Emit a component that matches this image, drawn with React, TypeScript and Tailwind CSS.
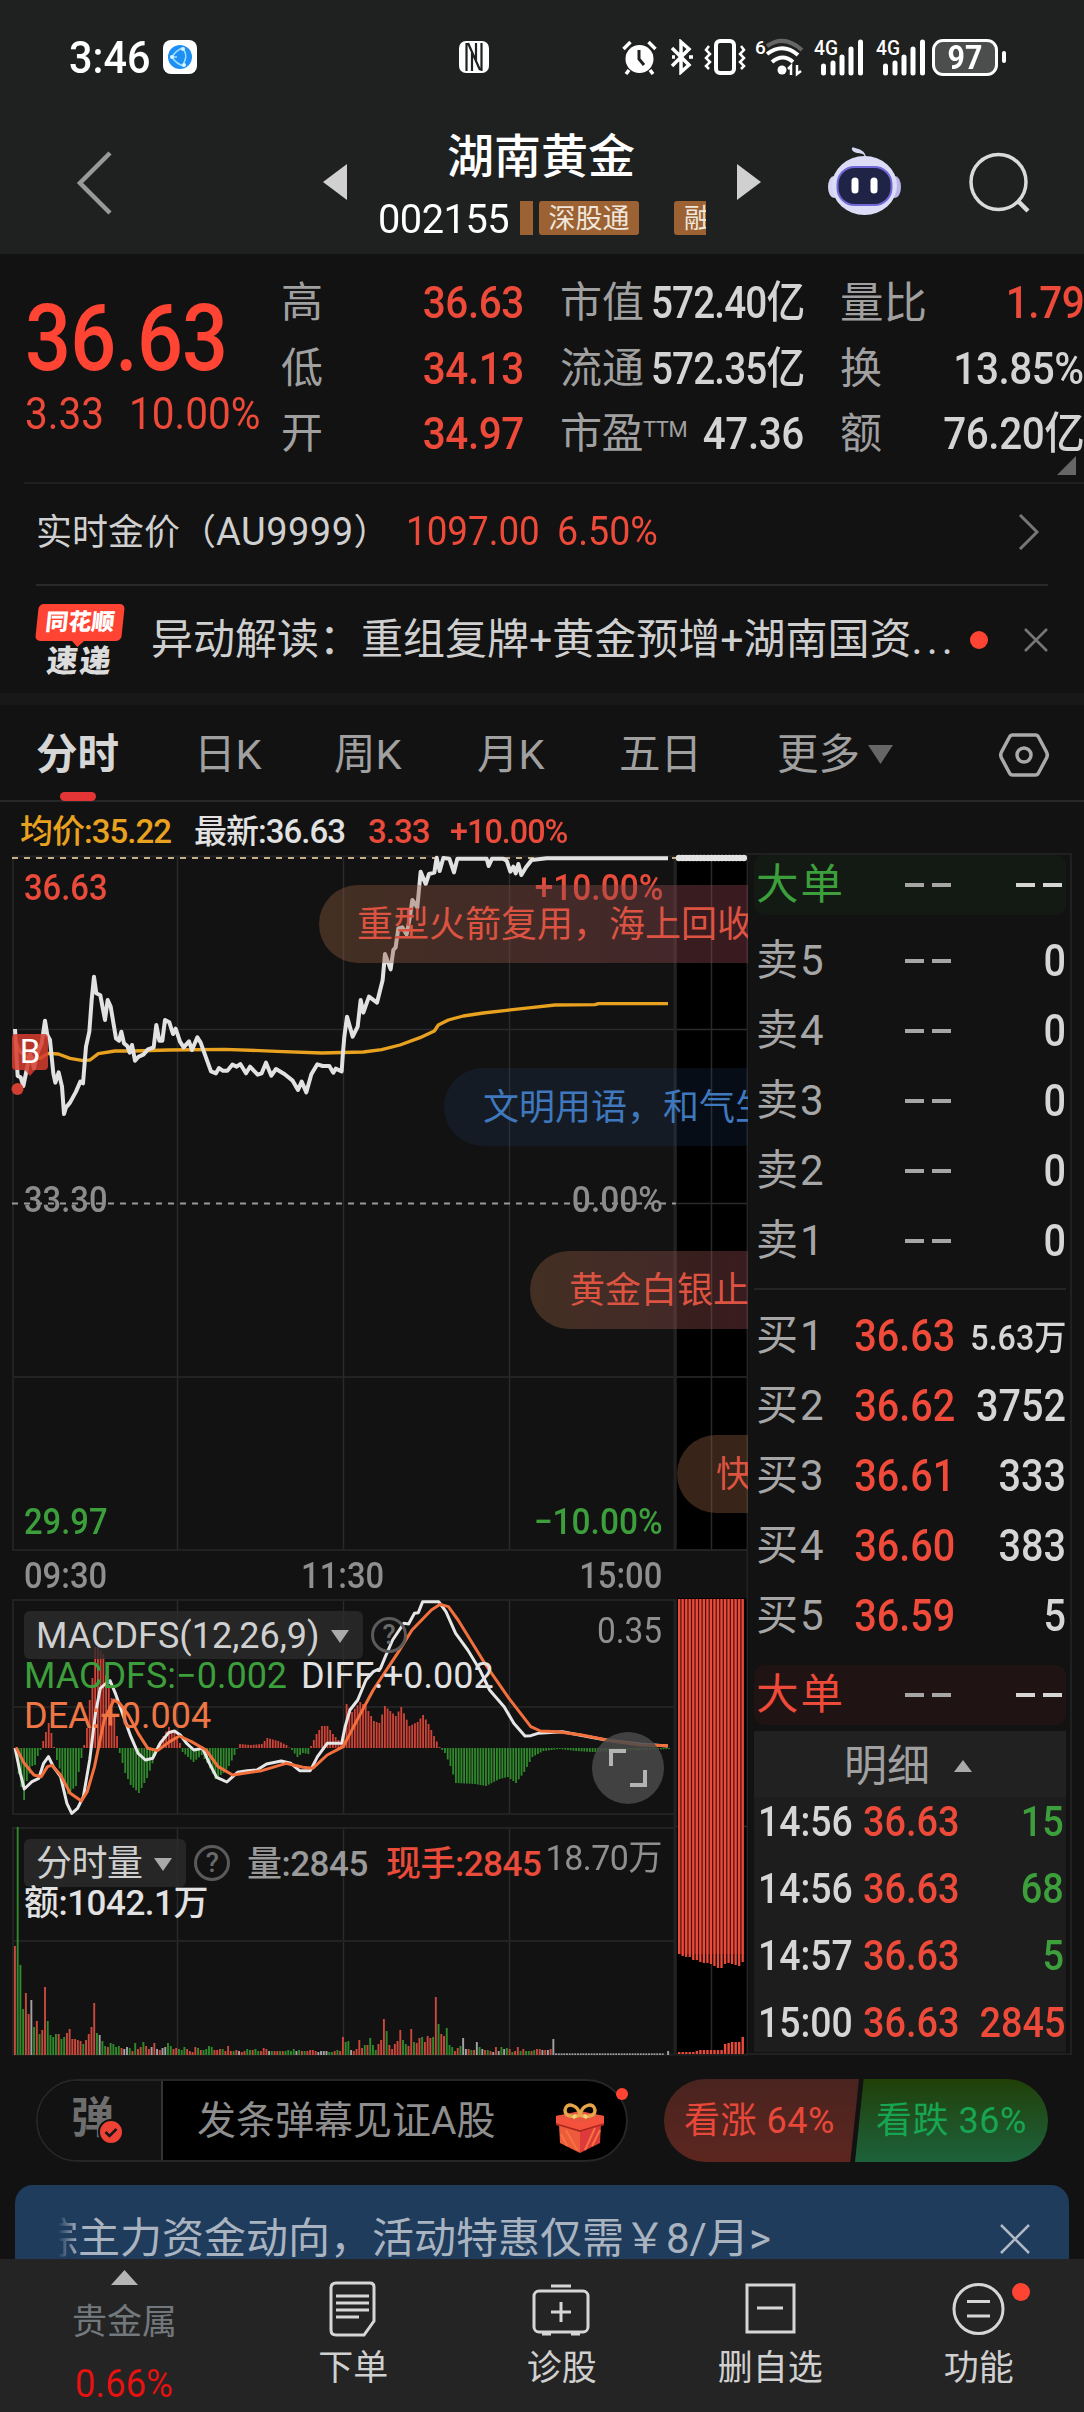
import type { ReactNode } from "react";

const PRICE_LINE =
  "45,567 53,708 62,712 70,738 80,690 90,640 102,685 112,640 125,610 135,542 142,585 150,600 160,700 166,728 176,697 186,740 192,822 198,802 210,788 228,755 241,725 249,730 258,620 268,575 275,480 282,410 289,460 301,466 315,540 323,480 332,500 348,595 357,602 364,575 372,610 382,618 389,638 396,615 405,662 416,650 430,644 444,628 461,622 469,555 478,602 487,602 495,540 508,547 519,582 527,566 540,605 551,622 567,604 576,630 592,592 602,608 617,650 633,694 648,700 657,684 668,692 682,692 697,674 710,680 721,672 738,700 750,680 773,704 785,700 798,668 814,707 828,687 853,702 878,722 894,750 905,725 919,757 934,703 952,673 968,678 988,678 1000,698 1007,686 1025,694 1028,650 1033,590 1041,530 1058,590 1073,560 1082,480 1090,518 1107,470 1131,488 1148,420 1155,342 1172,388 1180,330 1187,322 1195,265 1207,262 1220,283 1230,230 1237,180 1252,202 1262,95 1277,132 1287,102 1303,98 1310,53 1319,93 1330,54 1348,56 1362,97 1372,56 1460,56 1466,78 1476,56 1510,56 1520,62 1531,95 1540,80 1547,100 1555,72 1564,105 1578,82 1595,60 1640,55 2004,55";

const AVG_LINE =
  "45,600 60,635 80,650 120,655 145,640 175,642 210,655 245,661 270,660 295,641 345,633 400,633 505,630 675,628 830,634 965,639 1090,636 1145,629 1200,615 1260,593 1303,573 1315,555 1345,540 1390,528 1450,519 1520,511 1600,502 1665,495 1785,494 1795,491 2004,491";

const DIFF_LINE =
  "31,504 42,580 50,627 66,605 80,595 90,550 100,530 110,560 125,590 138,670 148,700 160,685 172,650 185,540 197,400 207,325 217,312 227,302 238,340 255,410 270,470 285,520 300,540 315,535 330,490 348,458 360,453 372,465 385,490 400,510 418,505 432,550 447,592 468,606 490,577 510,572 530,570 550,552 580,543 600,550 618,572 640,572 655,530 675,490 705,490 712,440 722,390 738,360 755,300 770,275 785,265 795,230 810,180 833,130 843,132 855,100 863,98 872,65 905,65 920,95 940,160 965,210 990,270 1010,330 1040,380 1060,430 1083,468 1095,467 1110,460 1160,455 1250,480 1320,492 1378,498";

const DEA_LINE =
  "33,502 50,550 70,585 85,590 98,560 107,556 125,585 145,640 168,663 180,635 195,560 215,420 235,360 247,370 265,405 285,460 305,505 325,512 350,485 370,468 395,485 425,510 450,560 480,585 540,572 590,550 625,562 645,565 675,525 708,500 735,425 770,330 820,220 850,150 890,90 908,73 925,80 945,120 1000,250 1050,355 1095,440 1115,453 1150,455 1200,465 1260,482 1320,495 1378,497";

// [minute, bar height], minutes in between are interpolated
const MACD_KEYS = [
  [0, 0], [1, -26], [3, -52], [4, -33], [6, -18], [7, -17], [8, -8], [9, -2], [10, 7], [12, 25], [13, 15], [14, 1],
  [15, -12], [19, -46], [22, -38], [24, -10], [25, 3], [26, 20], [27, 48], [28, 70], [29, 101], [30, 101], [32, 94],
  [33, 73], [35, 50], [36, 33], [37, 12], [38, -5], [40, -25], [42, -37], [45, -45], [48, -30], [51, -8], [52, 3],
  [56, 21], [59, 12], [60, 5], [61, -4], [63, -9], [65, -14], [68, -7], [70, -15], [73, -31], [76, -25], [78, -18],
  [80, -7], [81, -1], [82, 4], [86, 3], [90, 4], [92, 10], [96, 7], [99, 3], [101, -2], [103, -9], [105, -5],
  [107, -6], [108, 2], [110, 14], [112, 22], [114, 22], [116, 14], [119, 5], [120, 12], [121, 44], [123, 36],
  [126, 46], [128, 42], [131, 27], [133, 25], [135, 42], [139, 32], [141, 41], [144, 22], [147, 26], [149, 33],
  [151, 24], [153, 12], [155, 1], [157, -5], [159, -18], [161, -35], [168, -36], [172, -38], [177, -31], [180, -29],
  [183, -35], [186, -24], [189, -9], [193, -3], [199, -1], [205, -3], [211, -4], [220, -3], [239, -1],
];

const VOLUMES =
  "r109 g228 g90 g46 r62 r41 w55 g28 r34 g21 r25 r68 g34 g20 g18 g21 r21 g16 g18 r22 r26 r16 r16 r15 r14 g11 r15 r21 r28 r52 g22 w20 g14 g9 r8 g12 g11 g8 g9 r7 w6 w8 g7 r4 g12 r6 r8 g13 r9 r6 w8 r12 w6 r5 w7 w8 g12 g9 r6 r7 g6 g5 g8 r6 r4 r3 r8 g7 r5 g5 g6 g9 g8 r5 r5 r6 g6 r4 r9 r4 g4 r5 w4 r3 r4 g6 g5 r5 g6 g4 r4 r7 r6 w4 g4 r4 r4 g4 r4 g4 g5 g4 g6 w4 g5 r4 g4 r4 r5 r5 r4 w3 w4 w4 w4 g3 g3 r4 g5 r4 r18 g13 g14 w5 r4 r6 r15 r7 g10 r10 g17 g10 g5 r11 r15 r36 g24 r10 r6 r11 r14 r25 g15 g11 r9 r26 g13 r12 r17 g18 r13 r19 r17 g18 r58 g31 r21 r19 g27 g10 g8 r4 r7 g9 w17 w6 r6 g5 r5 w13 g8 w6 r5 g5 r4 w3 r8 w4 g8 w6 g7 r6 g3 r4 r8 g4 r6 g4 g4 r4 g5 r6 r6 w5 r5 w5 r6 w16";

const AUCTION_BARS = [1954, 1956, 1957, 1957, 1960, 1960, 1962, 1963, 1963, 1964, 1966, 1968, 1968, 1964, 1963, 1964, 1965, 1966, 1962];
const AUCTION_VOLUMES = [2, 2, 2, 2, 2, 3, 4, 4, 4, 4, 4, 4, 4, 10, 11, 12, 12, 12, 17];

const RED = "#ea4b3b";
const GREEN = "#2f8a2b";

const macdAt = (minute: number) => {
  const next = MACD_KEYS.findIndex(([m]) => m >= minute);
  if (next <= 0) return MACD_KEYS[0][1];
  const [m0, v0] = MACD_KEYS[next - 1];
  const [m1, v1] = MACD_KEYS[next];
  return v0 + ((v1 - v0) * (minute - m0)) / (m1 - m0);
};

const volumes = VOLUMES.split(" ").map((v) => ({ kind: v[0], size: Number(v.slice(1)) }));
while (volumes.length < 238) volumes.push({ kind: "w", size: 1.6 });
volumes.push({ kind: "w", size: 0 }, { kind: "w", size: 4 });

const volumeColor = (kind: string) => (kind === "r" ? "#c9493c" : kind === "g" ? GREEN : "#a3a3a3");

const ChartLayer = () => (
  <svg className="absolute inset-0" width="748" height="1203" viewBox="0 853 748 1203" fill="none">
    <rect x="677" y="857" width="70" height="1198" fill="#000" />
    <rect x="676" y="1551" width="72" height="47" fill="#121212" />
    <g stroke="#2a2a2a" strokeWidth="1.5">
      {[177.5, 343.5, 509.5].map((x) => (
        <path key={x} d={`M${x} 856V1550M${x} 1599V1814M${x} 1828V2055`} />
      ))}
      <path d="M711.5 856V1550M711.5 1599V2055M13 1029.5H748M13 1377H748M676 1203.5H748M676 1826.5H748" />
    </g>
    <g stroke="#222" strokeWidth="2">
      <path d="M12 856.5H748M13 856V1550M12 1550H748M747.5 853V2055" />
      <path d="M12 1600H675M12 1707H675M12 1814H675M13 1599V1815" />
      <path d="M12 1828H675M12 1941H675M13 1828V2055M12 2054.5H748" />
      <path d="M675 856V1551M675 1599V2055" strokeWidth="3" />
    </g>
    <path d="M12 858H676" stroke="#c6ae88" strokeWidth="2" strokeDasharray="6 6" />
    <path d="M12 1203.5H676" stroke="#9a9a9a" strokeWidth="2" strokeDasharray="6 6" />
    <g transform="translate(0 840) scale(.33333)" strokeLinejoin="round">
      <polyline points={AVG_LINE} stroke="#e9a21f" strokeWidth="10" />
      <polyline points={PRICE_LINE} stroke="#e2e2e2" strokeWidth="12" />
    </g>
    <path d="M679 858H743" stroke="#e2e2e2" strokeWidth="4.500" strokeLinecap="round" />
    <path d="M679 858H744" stroke="#e2e2e2" strokeWidth="6.500" strokeLinecap="round" strokeDasharray="0 3.6" />

    {Array.from({ length: 240 }, (_, i) => {
      const h = macdAt(i);
      return (
        <rect key={i} x={15 + i * 2.733} y={h > 0 ? 1748 - h : 1748} width="1.8" height={Math.abs(h)} fill={h > 0 ? "#d04437" : GREEN} />
      );
    })}
    <g transform="translate(0 1580) scale(.48473 .33333)" strokeLinejoin="round">
      <polyline points={DIFF_LINE} stroke="#e6e6e6" strokeWidth="3" vectorEffect="non-scaling-stroke" />
      <polyline points={DEA_LINE} stroke="#f3703c" strokeWidth="3" vectorEffect="non-scaling-stroke" />
    </g>

    {volumes.map(({ kind, size }, i) => (
      <rect key={i} x={14 + i * 2.733} y={2055 - size} width="1.9" height={size} fill={volumeColor(kind)} />
    ))}

    <rect x="678" y="1599" width="66" height="355" fill="#4a100c" />
    {AUCTION_BARS.map((y, i) => (
      <rect key={i} x={678 + i * 3.53} y="1599" width="2.3" height={y - 1599} fill={RED} />
    ))}
    {AUCTION_VOLUMES.map((h, i) => (
      <rect key={i} x={678 + i * 3.53} y={2054 - h} width="2.4" height={h} fill={RED} />
    ))}

    <path d="M16 1034h28a4 4 0 0 1 4 4v28a4 4 0 0 1-4 4h-9l-5 6-5-6h-9a4 4 0 0 1-4-4v-28a4 4 0 0 1 4-4z" fill="#d63c2e" opacity=".85" />
    <text x="30" y="1063" textAnchor="middle" fontSize="33" fontFamily="Roboto" fontWeight="400" fill="#fff">B</text>
    <circle cx="17.500" cy="1089" r="6" fill="#cf4033" />
  </svg>
);

const StatusBar = () => (
  <div className="flex h-[112px] items-center pt-0.5 pl-[69px] text-white">
    <span className="w-[94px] origin-left scale-x-92 text-[45px] font-medium">3:46</span>
    <svg width="34" height="34" viewBox="0 0 34 34">
      <rect width="34" height="34" rx="8" fill="#fff" />
      <circle cx="17" cy="17" r="12" fill="#1e8ff5" />
      <path d="M9 17C12 12 16 9 20 8M9 17c3 5 8 8 12 9M21 10c3 5 2 9-1 15M9 17h5" stroke="#9fe0ff" strokeWidth="1.500" fill="none" />
      <circle cx="9" cy="17" r="2" fill="#d8f4ff" />
      <circle cx="20" cy="9" r="2" fill="#d8f4ff" />
      <circle cx="21" cy="25" r="2" fill="#d8f4ff" />
    </svg>
    <svg className="ml-[261px]" width="32" height="34" viewBox="0 0 32 34" fill="none">
      <rect x="1" y="1" width="30" height="32" rx="7" fill="#fff" />
      <path d="M8.500 3v28M14 13v18M10 3l12 27M18 3v18M23.500 3v28" stroke="#1f2120" strokeWidth="2.200" />
    </svg>
    <svg className="ml-[132px]" width="35" height="35" viewBox="0 0 35 35" fill="none" stroke="#fff">
      <circle cx="17.500" cy="19" r="14" fill="#fff" stroke="none" />
      <path d="M17 10v9l5 6" stroke="#1f2120" strokeWidth="3" />
      <path d="M1.500 9l7-7M33.500 9l-7-7M7 30l-3 4M28 30l3 4" strokeWidth="3.500" />
    </svg>
    <svg className="ml-[13px]" width="24" height="36" viewBox="0 0 24 36" fill="none" stroke="#fff" strokeWidth="3.500">
      <path d="M2 9l17 17-8 7V3l8 7L2 27" />
      <path d="M2 18h3M19 18h4" />
    </svg>
    <svg className="ml-[10px]" width="42" height="36" viewBox="0 0 42 36" fill="none" stroke="#fff" strokeWidth="3">
      <rect x="12" y="2" width="18" height="32" rx="4" strokeWidth="4" />
      <path d="M5 7l-3 4 4 4-4 4 4 4-4 4 3 3M37 7l3 4-4 4 4 4-4 4 4 4-3 3" strokeWidth="2.500" />
    </svg>
    <svg className="ml-[9px]" width="50" height="40" viewBox="0 0 50 40" fill="none" stroke="#fff" strokeWidth="4">
      <text x="0" y="17" fontSize="19" fontFamily="Roboto" fontWeight="500" fill="#fff" stroke="none">6</text>
      <path d="M12 9Q29-3 47 13" stroke="#666" />
      <path d="M12 17Q28 5 43 18M17 25Q28 16 38 25" />
      <circle cx="27" cy="33" r="4.500" fill="#fff" stroke="none" />
      <path d="M36 38V29l-3 3M42 28v9l4-3" strokeWidth="2.500" />
    </svg>
    {[0, 1].map((i) => (
      <svg key={i} className="ml-[9px]" width="53" height="38" viewBox="0 0 53 38">
        <text x="0" y="17" fontSize="21" fontFamily="Roboto" fontWeight="500" fill="#fff" textLength="24" lengthAdjust="spacingAndGlyphs">4G</text>
        <path d="M9.500 28v7M19 25v10M28 19v16M37 11v24M46.500 4v31" stroke="#fff" strokeWidth="5" strokeLinecap="round" />
      </svg>
    ))}
    <div className="ml-[3px] flex h-[37px] w-[66px] items-center justify-center rounded-[11px] border-[3px] border-white bg-[#4c4d4d] text-[33px] font-bold"><span className="scale-x-92">97</span></div>
    <div className="ml-1 h-3 w-1 rounded-full bg-white" />
  </div>
);

const Robot = () => (
  <svg className="mt-[-5px] ml-[67px]" width="73" height="68" viewBox="0 0 73 68" fill="none">
    <path d="M37 11C36 5 32 7 29 6c-6-1-7-7-2-5 5 1 10 3 11 9z" fill="#d5d6f0" />
    <ellipse cx="6" cy="40" rx="6" ry="11" fill="#d6d4f2" />
    <ellipse cx="67" cy="40" rx="6" ry="11" fill="#b9b5ea" />
    <ellipse cx="36.500" cy="38.500" rx="32.500" ry="29.500" fill="#dcdcf6" />
    <rect x="8.500" y="19" width="56" height="40" rx="18" fill="#7368d8" />
    <rect x="10.500" y="21" width="52" height="36" rx="16" fill="#1f2447" />
    <path d="M27 34v9M46 34v9" stroke="#fff" strokeWidth="7" strokeLinecap="round" />
  </svg>
);

const TitleBar = () => (
  <div className="flex h-[142px] items-center pl-[76px]">
    <svg className="mt-[-1px]" width="37" height="66" viewBox="0 0 37 66" fill="none">
      <path d="M34 3L4 33l30 30" stroke="#999" strokeWidth="4.500" />
    </svg>
    <svg className="mt-[-2px] ml-[210px]" width="24" height="36"><path d="M24 0v36L0 18z" fill="#d0d0d0" /></svg>
    <div className="ml-[31px] flex w-[331px] flex-col">
      <div className="flex h-[66px] items-center justify-center pr-[5px] pb-1 text-[47px] font-medium text-white">湖南黄金</div>
      <div className="mt-1 flex h-[46px] items-center overflow-hidden">
        <span className="flex w-[142px]"><span className="origin-left scale-x-97 pt-0.5 text-[41px] tracking-[-0.5px] text-white">002155</span></span>
        <span className="h-[34px] w-[13px] shrink-0 bg-[#9c6233]" />
        <span className="ml-1.5 flex h-[34px] w-[100px] shrink-0 items-center justify-center rounded-[3px] bg-[#9c6233] pt-0.5 text-[27px] text-[#f0e6dc]">深股通</span>
        <span className="ml-[35px] flex h-[34px] w-8 shrink-0 items-center overflow-hidden rounded-l-[3px] bg-[#9c6233] pt-0.5 pl-2.5 text-[27px] text-[#f0e6dc]">
          <span className="shrink-0">融</span>
        </span>
      </div>
    </div>
    <svg className="mt-[-2px] ml-[28px]" width="24" height="36"><path d="M0 0v36l24-18z" fill="#d0d0d0" /></svg>
    <Robot />
    <svg className="mt-[-1px] ml-[67px]" width="64" height="64" viewBox="0 0 64 64" fill="none" stroke="#dadada" strokeWidth="3.500">
      <circle cx="30.500" cy="31" r="27.500" />
      <path d="M50 50l10 10" strokeWidth="4.500" />
    </svg>
  </div>
);

type CellProps = {
  label: ReactNode;
  value: string;
  up?: boolean;
}

const Cell = ({ label, value, up }: CellProps) => (
  <div className="flex h-[65.5px] items-center justify-between whitespace-nowrap pt-px">
    <span className="text-[42px] text-[#a0a0a0]">{label}</span>
    <span className="flex w-0 justify-end">
      <span className={`origin-right text-[44px] font-medium ${value.startsWith("572") ? "scale-x-88 tracking-[-1px]" : "scale-x-92 tracking-[-0.5px]"} ${up ? "text-[#ee4a3a]" : "text-[#d4d4d4]"}`}>{value}</span>
    </span>
  </div>
);

const Quote = () => (
  <div className="flex h-[228px]">
    <div className="w-[281px] pt-[50px] pl-[25px] text-[#ff4433]">
      <div className="flex h-[70px] w-[231px] origin-left scale-x-88 items-center text-[92px] font-medium tracking-[-1px]">36.63</div>
      <div className="mt-5 flex h-10 w-[280px] origin-left scale-x-92 items-center text-[44px] text-[#ee4a3a]">
        <span className="w-[113px]">3.33</span>
        <span>10.00%</span>
      </div>
    </div>
    <div className="w-[243px] pt-4">
      <Cell label="高" value="36.63" up />
      <Cell label="低" value="34.13" up />
      <Cell label="开" value="34.97" up />
    </div>
    <div className="ml-9 w-[244px] pt-4">
      <Cell label="市值" value="572.40亿" />
      <Cell label="流通" value="572.35亿" />
      <Cell label={<span className="-tracking-[0.5px]">市盈<sup className="text-[22px]">TTM</sup></span>} value="47.36" />
    </div>
    <div className="ml-[36px] w-[244px] pt-4">
      <Cell label={<span className="text-[43.5px]">量比</span>} value="1.79" up />
      <Cell label="换" value="13.85%" />
      <Cell label="额" value="76.20亿" />
      <svg className="mt-[-11px] ml-[217px]" width="19" height="19"><path d="M19 0v19H0z" fill="#666" /></svg>
    </div>
  </div>
);

const GoldPrice = () => (
  <div className="ml-6 border-t-2 border-[#1f1f1f]">
    <div className="mr-9 ml-3 flex h-[102px] items-center border-b-2 border-[#2a2a2a] pb-1 text-[36px]">
      <span className="w-[370px] whitespace-nowrap text-[#d0d0d0]">实时金价（<span className="text-[38px] tracking-[0.5px]">AU9999</span>）</span>
      <span className="w-[151px] origin-left scale-x-92 text-[40px] text-[#ee4a3a]">1097.00</span>
      <span className="origin-left scale-x-94 text-[40px] text-[#ee4a3a]">6.50%</span>
      <svg className="ml-auto mr-2" width="22" height="36" fill="none"><path d="M2 1l17 17L2 35" stroke="#777" strokeWidth="3" /></svg>
    </div>
  </div>
);

const News = () => (
  <div className="flex h-[107px] items-center pl-[37px]">
    <div className="w-[114px] pt-0.5">
      <div className="relative flex h-[37px] w-[86px] -skew-x-6 items-center justify-center rounded-[5px] bg-[#ff4433] text-[23px] font-black text-white">
        同花顺
        <span className="absolute -bottom-1 left-[38px] size-2.5 rotate-45 bg-[#ff4433]" />
      </div>
      <div className="mt-1 flex h-8 w-[86px] -skew-x-6 items-center justify-center text-[31px] font-black tracking-[2px] text-[#dcdcdc]">速递</div>
    </div>
    <div className="w-[819px] whitespace-nowrap text-[42px] text-[#cfcfcf]">
      异动解读：重组复牌<span className="text-[41px]">+</span>黄金预增<span className="text-[41px]">+</span>湖南国资<span className="tracking-[4px]">...</span>
    </div>
    <span className="size-[18px] shrink-0 rounded-full bg-[#ff4433]" />
    <svg className="ml-9" width="24" height="24" fill="none"><path d="M1 1l22 22M23 1L1 23" stroke="#777" strokeWidth="2.500" /></svg>
  </div>
);

const Tabs = () => (
  <div className="flex h-[97px] items-center border-b-2 border-[#282828] pt-1 pl-[36px] text-[41.5px] text-[#a0a0a0]">
    <div className="relative w-[158px] font-bold text-[#d6d6d6]">
      分时
      <span className="absolute top-[58px] left-6 h-[9px] w-9 rounded-full bg-[#e33535]" />
    </div>
    <span className="w-[140px]">日K</span>
    <span className="w-[143px]">周K</span>
    <span className="w-[142px]">月K</span>
    <span className="w-[158px]">五日</span>
    <span className="w-[91px]">更多</span>
    <svg width="25" height="19"><path d="M0 0h25L12.500 19z" fill="#666" /></svg>
    <svg className="ml-[106px]" width="50" height="46" viewBox="0 0 50 46" fill="none" stroke="#aaa" strokeWidth="3.500">
      <path d="M13.500 3h23q2 0 3 2l8 15q1.500 3 0 6l-8 15q-1 2-3 2h-23q-2 0-3-2l-8-15q-1.500-3 0-6l8-15q1-2 3-2z" />
      <circle cx="25" cy="23" r="7" />
    </svg>
  </div>
);

const Averages = () => (
  <div className="flex h-[51px] items-center pt-2 pl-5 text-[33px] font-medium tracking-[-1px]">
    <span className="w-[174px] text-[#e9a21f]">均价:35.22</span>
    <span className="w-[174px] text-[#e2e2e2]">最新:36.63</span>
    <span className="w-[82px] text-[#ea4b3b]">3.33</span>
    <span className="origin-left scale-x-98 text-[#ea4b3b]">+10.00%</span>
  </div>
);

const Help = () => (
  <span className="flex size-9 shrink-0 items-center justify-center rounded-full border-[3px] border-[#5a5a5a] text-[27px] text-[#6a6a6a]">?</span>
);

const Down = () => (
  <svg className="shrink-0" width="18" height="13"><path d="M0 0h18L9 13z" fill="#aaa" /></svg>
);

type AxisRowProps = {
  left: string;
  right: string;
  className: string;
}

const AxisRow = ({ left, right, className }: AxisRowProps) => (
  <div className={`flex h-10 items-center justify-between ${className}`}>
    <span className="origin-left scale-x-91">{left}</span>
    <span className="origin-right scale-x-93">{right}</span>
  </div>
);

const Charts = () => (
  <div className="relative h-[1203px] w-[748px] overflow-hidden text-[36px] font-medium whitespace-nowrap">
    <ChartLayer />
    <div className="relative h-[699px] pt-[15px] pr-[85px] pl-6">
      <AxisRow left="36.63" right="+10.00%" className="text-[#ea4b3b]" />
      <AxisRow left="33.30" right="0.00%" className="mt-[272px] text-[#8c8c8c]" />
      <AxisRow left="29.97" right="−10.00%" className="mt-[282px] text-[#3c9f3c]" />
    </div>
    <div className="relative flex h-[46px] items-center justify-between pt-0.5 pr-[86px] pl-6 text-[#8f8f8f]">
      <span className="origin-left scale-x-91">09:30</span>
      <span className="scale-x-91">11:30</span>
      <span className="origin-right scale-x-91">15:00</span>
    </div>

    <div className="relative h-[218px] pt-[13px] pl-6">
      <div className="flex h-12 items-center">
        <div className="flex h-12 w-[339px] items-center justify-between rounded-md bg-[#2c2c2c]/80 pt-0.5 pr-3.5 pl-3 text-[36px] font-normal text-[#d0d0d0]">
          <span>MACDFS(12,26,9)</span>
          <Down />
        </div>
        <div className="ml-2"><Help /></div>
        <span className="mr-[86px] mb-2 ml-auto origin-right scale-x-93 font-normal text-[#8f8f8f]">0.35</span>
      </div>
      <div className="mt-[-3px] flex h-10 items-center">
        <span className="w-[277px] font-normal text-[#3c9f3c]">MACDFS:−0.002</span>
        <span className="font-normal text-[#e2e2e2]">DIFF:+0.002</span>
      </div>
      <div className="flex h-10 items-center font-normal text-[#ee7645]">DEA:+0.004</div>
      <div className="absolute top-[134px] left-[592px] flex size-[72px] items-center justify-center rounded-full bg-[#4a4a4a]/85">
        <svg width="38" height="38" fill="none" stroke="#b4b4b4" strokeWidth="4"><path d="M2 17V2h15M36 21v15H21" /></svg>
      </div>
    </div>

    <div className="relative pt-[23px] pl-6 text-[35px] tracking-[-0.5px]">
      <div className="flex h-12 items-center">
        <div className="flex h-12 w-[162px] items-center justify-between rounded-md bg-[#2c2c2c]/80 pt-0.5 pr-3.5 pl-3 text-[36px] font-normal text-[#d0d0d0]">
          <span>分时量</span>
          <Down />
        </div>
        <div className="mr-[17px] ml-2"><Help /></div>
        <span className="w-[139px] pt-0.5 text-[#9a9a9a]">量:2845</span>
        <span className="pt-0.5 text-[#ea4b3b]">现手:2845</span>
        <span className="mr-[86px] mb-2.5 ml-auto origin-right scale-x-97 font-normal text-[#8f8f8f]">18.70万</span>
      </div>
      <div className="mt-[-2px] flex h-9 items-center text-[#e2e2e2]">额:1042.1万</div>
    </div>

    <div className="absolute top-8 left-[319px] flex h-[78px] w-[560px] items-center rounded-full bg-linear-to-r from-[#8d5a3b]/40 to-[#8d3a55]/40 pt-0.5 pl-[38px] text-[36px] font-normal text-[#dc5341]">重型火箭复用，海上回收</div>
    <div className="absolute top-[215px] left-[444px] flex h-[78px] w-[500px] items-center rounded-full bg-[#254a7d]/18 pt-0.5 pl-[39px] text-[36px] font-normal text-[#3f78bd]">文明用语，和气生财</div>
    <div className="absolute top-[398px] left-[530px] flex h-[78px] w-[330px] items-center rounded-full bg-linear-to-r from-[#8d5a3b]/40 to-[#8d3a55]/40 pt-0.5 pl-[39px] text-[36px] font-normal text-[#dc5341]">黄金白银止</div>
    <div className="absolute top-[582px] left-[677px] flex h-[78px] w-[330px] items-center rounded-full bg-[#8d5a3b]/40 pt-0.5 pl-[39px] text-[36px] font-normal text-[#dc5341]">快</div>
  </div>
);

const Dashes = ({ bright }: { bright?: boolean }) => (
  <span className={`flex gap-2 ${bright ? "text-[#d6d6d6]" : "text-[#a6a6a6]"}`}>
    <span className="h-1 w-[19px] bg-current" />
    <span className="h-1 w-[19px] bg-current" />
  </span>
);

type LevelProps = {
  label: string;
  price?: string;
  amount: string;
}

const Level = ({ label, price, amount }: LevelProps) => (
  <div className="flex h-[70px] items-center pt-0.5 pl-0.5">
    <span className="w-[98px] text-[42px] tracking-[2px] text-[#a6a6a6]">{label}</span>
    <span className="flex w-[101px] justify-end text-[44px] font-medium text-[#f04a3a]">
      {price ? <span className="origin-right scale-x-90">{price}</span> : <span className="mr-1"><Dashes /></span>}
    </span>
    <span className={`ml-auto origin-right font-medium text-[#d6d6d6] ${amount.endsWith("万") ? "scale-x-92 pt-1 text-[35px]" : "scale-x-90 text-[44px]"}`}>{amount}</span>
  </div>
);

const BUYS = [
  ["买1", "36.63", "5.63万"],
  ["买2", "36.62", "3752"],
  ["买3", "36.61", "333"],
  ["买4", "36.60", "383"],
  ["买5", "36.59", "5"],
];

const OrderBook = () => (
  <div className="h-[1202px] w-[324px] border-t-2 border-r-2 border-b-2 border-[#202020] pr-[4px] pl-1.5">
    <div className="flex h-[60px] items-center rounded-[10px] bg-[#131a13] pr-1 pl-0.5">
      <span className="w-[149px] text-[42.5px] tracking-[2px] text-[#3c9f3c]">大单</span>
      <Dashes />
      <div className="ml-auto"><Dashes bright /></div>
    </div>
    <div className="h-[375px] border-b-2 border-[#242424] pt-[10px]">
      {[5, 4, 3, 2, 1].map((n) => <Level key={n} label={`卖${n}`} amount="0" />)}
    </div>
    <div className="h-[375px] pt-[10px]">
      {BUYS.map(([label, price, amount]) => <Level key={label} label={label} price={price} amount={amount} />)}
    </div>
    <div className="flex h-[60px] items-center rounded-[10px] bg-[#1f1413] pr-1 pl-0.5">
      <span className="w-[149px] text-[42.5px] tracking-[2px] text-[#ee4a3a]">大单</span>
      <Dashes />
      <div className="ml-auto"><Dashes bright /></div>
    </div>
    <div className="mt-1.5 flex h-[66px] items-center bg-[#212121] pt-1 pl-[90px] text-[43px] text-[#a0a0a0]">
      明细
      <svg className="ml-[24px]" width="18" height="12"><path d="M0 12h18L9 0z" fill="#aaa" /></svg>
    </div>
    <div className="h-[255px] bg-[#1d1d1d]">
      {[
        ["14:56", "15", "text-[#3c9f3c]"],
        ["14:56", "68", "text-[#3c9f3c]"],
        ["14:57", "5", "text-[#3c9f3c]"],
        ["15:00", "2845", "text-[#ee4a3a]"],
      ].map(([time, amount, color], i) => (
        <div key={i} className="flex h-[67px] items-start pt-1 pr-0.5 pl-1 text-[42px] font-medium">
          <span className="w-[105px] origin-left scale-x-89 text-[#d6d6d6]">{time}</span>
          <span className="origin-left scale-x-90 text-[#ee4a3a]">36.63</span>
          <span className={`ml-auto origin-right scale-x-90 ${color}`}>{amount}</span>
        </div>
      ))}
    </div>
  </div>
);

const Gift = () => (
  <svg width="50" height="52" viewBox="0 0 50 52" fill="none">
    <path d="M4 23l21 7v21L5 41z" fill="#ee5a3c" />
    <path d="M46 23l-21 7v21l20-10z" fill="#de3a3c" />
    <path d="M1 14l24-4 24 4v9l-24 7-24-7z" fill="#f4523d" />
    <path d="M1 14l24 6 24-6-24-5z" fill="#e8553f" />
    <path d="M1 22l24 7 24-7" stroke="#a8261e" strokeWidth="1.500" />
    <path d="M30 48l10-22M37 44l8-16M11 28l11 20M6 32l6 12" stroke="#f4743f" strokeWidth="2" />
    <path d="M25 13C17 16 10 14 10 8c1-8 13-6 15 5 2-11 14-13 15-5 0 6-7 8-15 5z" stroke="#e5a548" strokeWidth="3.500" />
    <path d="M21 13l-3 3M29 13l3 3" stroke="#f6cf7a" strokeWidth="3.500" />
  </svg>
);

const Danmaku = () => (
  <div className="flex h-[129px] pt-[23px] pl-9">
    <div className="relative flex h-[83px] w-[592px] items-center rounded-full border-2 border-[#262626] bg-black">
      <div className="relative flex h-[79px] w-[125px] items-center rounded-l-full border-r-2 border-[#333] bg-[#121212] pb-1 pl-[33px] text-[43px] font-bold text-[#6e6e6e]">
        弹
        <svg className="absolute top-[38px] left-[60px]" width="26" height="26" fill="none">
          <circle cx="13" cy="13" r="12" fill="#ee4334" stroke="#121212" strokeWidth="2" />
          <path d="M7.500 13l4 4 7-7" stroke="#16181c" strokeWidth="2.500" />
        </svg>
      </div>
      <span className="pt-0.5 pl-[34px] text-[39px] text-[#8e8e8e]">发条弹幕见证A股</span>
      <div className="mt-[15px] mr-[21px] ml-auto"><Gift /></div>
      <span className="absolute top-[7px] right-[-2px] size-3 rounded-full bg-[#ff4433]" />
    </div>
    <div className="ml-9 flex h-[83px] w-[384px] overflow-hidden rounded-full text-[36px] tracking-[0.5px]">
      <div className="flex w-[195px] items-center bg-linear-to-b from-[#49231f] to-[#5d261f] pl-[20px] text-[#e8483a] [clip-path:polygon(0_0,100%_0,95.5%_100%,0_100%)]">看涨 64%</div>
      <div className="flex flex-1 items-center bg-linear-to-b from-[#204006] to-[#1c623b] pl-[21px] text-[#17a552] -ml-1 [clip-path:polygon(4.500%_0,100%_0,100%_100%,0_100%)]">看跌 36%</div>
    </div>
  </div>
);

const Banner = () => (
  <div className="mx-[15px] flex h-[74px] items-center overflow-hidden rounded-t-[18px] bg-[#1f3c5c] pt-[34px] pl-[43px] text-[42px] text-[#aab3c0]">
    <div className="flex w-[900px] overflow-hidden whitespace-nowrap leading-[60px]">
      <span className="flex w-[20px] justify-end overflow-hidden [mask-image:linear-gradient(to_right,transparent,black)]"><span>踪</span></span>
      主力资金动向，活动特惠仅需￥8/月&gt;
    </div>
    <svg className="ml-[42px]" width="30" height="30" fill="none"><path d="M1 1l28 28M29 1L1 29" stroke="#b0b8c4" strokeWidth="2.500" /></svg>
  </div>
);

const NAV = [
  {
    label: "下单",
    icon: (
      <>
        <path d="M10 2h34q4 0 4 4v34L38 54H10q-5 0-5-5V7q0-5 5-5z" />
        <path d="M10 15h33M10 22h33M10 29h33M10 36h23" />
      </>
    ),
  },
  {
    label: "诊股",
    icon: (
      <>
        <rect x="0" y="10" width="54" height="41" rx="5" />
        <path d="M17 5h20M17 31h20M27 21v20M8 53h9M37 53h9" />
      </>
    ),
  },
  {
    label: "删自选",
    icon: (
      <>
        <rect x="4" y="4" width="47" height="47" />
        <path d="M14 27h26" />
      </>
    ),
  },
  {
    label: "功能",
    icon: (
      <>
        <circle cx="27.500" cy="28" r="24.500" />
        <path d="M16 20.500h23M16 35h23" />
      </>
    ),
  },
];

const BottomNav = () => (
  <div className="flex h-[153px] bg-[#242424]">
    <div className="flex w-[249px] flex-col items-center pt-[11px] text-[35px] text-[#73787c]">
      <svg width="27" height="15"><path d="M13.500 0L27 15H0z" fill="#b5b5b5" /></svg>
      <span className="mt-5">贵金属</span>
      <span className="mt-[25px] scale-x-94 text-[39px] text-[#e81212]">0.66%</span>
    </div>
    {NAV.map(({ label, icon }) => (
      <div key={label} className="relative flex w-[208.500px] flex-col items-center pt-[22px] text-[35px] text-[#d0d0d0]">
        <svg className="overflow-visible" width="55" height="56" fill="none" stroke="#d6d6d6" strokeWidth="3">{icon}</svg>
        <span className="mt-[14px]">{label}</span>
        {label === "功能" && <span className="absolute top-6 left-[137px] size-[18px] rounded-full bg-[#ff4433]" />}
      </div>
    ))}
  </div>
);

const App = () => {
  return (
    <div className="h-[2412px] w-[1084px] overflow-hidden bg-[#121212] font-[Roboto,'Noto_Sans_CJK_SC',sans-serif] leading-none">
      <div className="h-[254px] bg-[#1f2120]">
        <StatusBar />
        <TitleBar />
      </div>
      <Quote />
      <GoldPrice />
      <News />
      <div className="h-3 bg-[#181818]" />
      <Tabs />
      <Averages />
      <div className="flex">
        <Charts />
        <OrderBook />
      </div>
      <Danmaku />
      <Banner />
      <BottomNav />
    </div>
  );
};

export default App;
